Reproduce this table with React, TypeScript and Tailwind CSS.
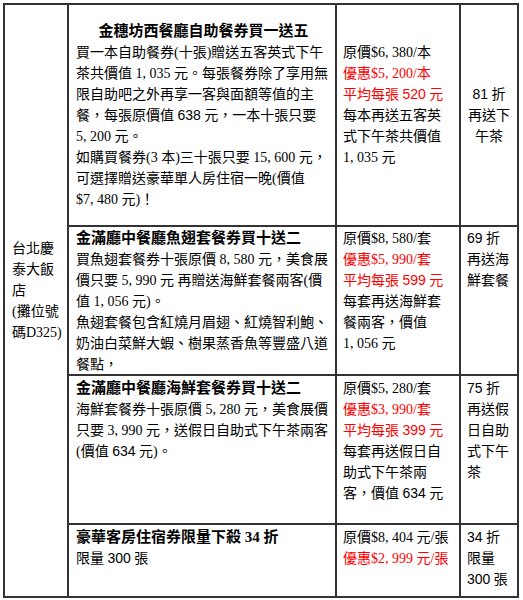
import React from "react";

const fmt = (node: React.ReactNode): React.ReactNode => {
  if (typeof node === "string") {
    const parts = node.split(/(?<=\d),(?=\d)/);
    if (parts.length === 1) return node;
    const out: React.ReactNode[] = [];
    parts.forEach((p, i) => {
      if (i > 0)
        out.push(
          <span key={`c${i}`} className="inline-block w-[7px]">
            ,
          </span>
        );
      out.push(<React.Fragment key={`p${i}`}>{p}</React.Fragment>);
    });
    return out;
  }
  if (Array.isArray(node)) return node.map((n, i) => <React.Fragment key={i}>{fmt(n)}</React.Fragment>);
  return node;
};

const S = ({ children }: { children: React.ReactNode }) => (
  <span className="font-['Liberation_Sans','Noto_Sans_CJK_TC',sans-serif]">{children}</span>
);

const L = ({ children, className = "" }: { children?: React.ReactNode; className?: string }) => (
  <div className={`whitespace-nowrap h-[21px] ${className}`}>{fmt(children)}</div>
);

const R = ({ children }: { children: React.ReactNode }) => (
  <L className="text-[#ff0000]">{children}</L>
);

const H = ({ children, center = false }: { children: React.ReactNode; center?: boolean }) => (
  <div className={`whitespace-nowrap h-[21px] font-bold text-[15px] ${center ? "text-center" : ""}`}>{children}</div>
);

const cell = "border-r-2 border-b-2 border-[#333] overflow-hidden";

export default function App() {
  return (
    <div className="bg-white min-h-[600px] pt-[3px] pl-[3px]">
      <div className="w-[516px] grid grid-cols-[64px_268px_124px_58px] grid-rows-[222px_149px_149px_73px] border-t-2 border-l-2 border-[#333] text-[14px] leading-[21px] text-black font-['Liberation_Serif','Noto_Sans_CJK_TC',serif]">
        {/* Column 1 */}
        <div className={`${cell} row-span-4 flex flex-col justify-center pl-[7px]`}>
          <L>台北慶</L>
          <L>泰大飯</L>
          <L>店</L>
          <L>(攤位號</L>
          <L>碼D325)</L>
          <L />
        </div>

        {/* Row 1 */}
        <div className={`${cell} flex flex-col justify-center pl-[7px] pr-[4px]`}>
          <H center>金穗坊西餐廳自助餐券買一送五</H>
          <L>買一本自助餐券(十張)贈送五客英式下午</L>
          <L>茶共價值 1,035 元。每張餐券除了享用無</L>
          <L>限自助吧之外再享一客與面額等值的主</L>
          <L>餐，每張原價值 <S>638</S> 元，一本十張只要</L>
          <L>5,200 元。</L>
          <L>如購買餐券(3 本)三十張只要 15,600 元，</L>
          <L>可選擇贈送豪華單人房住宿一晚(價值</L>
          <L>$7,480 元)！</L>
        </div>
        <div className={`${cell} flex flex-col justify-center pl-[6px]`}>
          <L>原價$6,380/本</L>
          <R>優惠$5,200/本</R>
          <R>平均每張 <S>520</S> 元</R>
          <L>每本再送五客英</L>
          <L>式下午茶共價值</L>
          <L>1,035 元</L>
          <L />
        </div>
        <div className={`${cell} flex flex-col justify-center items-center`}>
          <L><S>81</S> 折</L>
          <L>再送下</L>
          <L>午茶</L>
        </div>

        {/* Row 2 */}
        <div className={`${cell} pl-[7px] pt-[1px]`}>
          <H>金滿廳中餐廳魚翅套餐券買十送二</H>
          <L>買魚翅套餐券十張原價 8,580 元，美食展</L>
          <L>價只要 5,990 元 再贈送海鮮套餐兩客(價</L>
          <L>值 1,056 元)。</L>
          <L>魚翅套餐包含紅燒月眉翅、紅燒智利鮑、</L>
          <L>奶油白菜鮮大蝦、樹果蒸香魚等豐盛八道</L>
          <L>餐點，</L>
        </div>
        <div className={`${cell} pl-[6px] pt-[1px]`}>
          <L>原價$8,580/套</L>
          <R>優惠$5,990/套</R>
          <R>平均每張 <S>599</S> 元</R>
          <L>每套再送海鮮套</L>
          <L>餐兩客，價值</L>
          <L>1,056 元</L>
        </div>
        <div className={`${cell} pl-[6px] pt-[1px]`}>
          <L><S>69</S> 折</L>
          <L>再送海</L>
          <L>鮮套餐</L>
        </div>

        {/* Row 3 */}
        <div className={`${cell} pl-[7px] pt-[2px]`}>
          <H>金滿廳中餐廳海鮮套餐券買十送二</H>
          <L>海鮮套餐券十張原價 5,280 元，美食展價</L>
          <L>只要 3,990 元，送假日自助式下午茶兩客</L>
          <L>(價值 <S>634</S> 元)。</L>
        </div>
        <div className={`${cell} pl-[6px] pt-[2px]`}>
          <L>原價$5,280/套</L>
          <R>優惠$3,990/套</R>
          <R>平均每張 <S>399</S> 元</R>
          <L>每套再送假日自</L>
          <L>助式下午茶兩</L>
          <L>客，價值 <S>634</S> 元</L>
        </div>
        <div className={`${cell} pl-[6px] pt-[2px]`}>
          <L><S>75</S> 折</L>
          <L>再送假</L>
          <L>日自助</L>
          <L>式下午</L>
          <L>茶</L>
        </div>

        {/* Row 4 */}
        <div className={`${cell} pl-[7px] pt-[2px]`}>
          <H>豪華客房住宿券限量下殺 34 折</H>
          <L>限量 <S>300</S> 張</L>
        </div>
        <div className={`${cell} pl-[6px] pt-[2px]`}>
          <L>原價$8,404 元/張</L>
          <R>優惠$2,999 元/張</R>
        </div>
        <div className={`${cell} pl-[6px] pt-[2px]`}>
          <L><S>34</S> 折</L>
          <L>限量</L>
          <L><S>300</S> 張</L>
        </div>
      </div>
    </div>
  );
}
